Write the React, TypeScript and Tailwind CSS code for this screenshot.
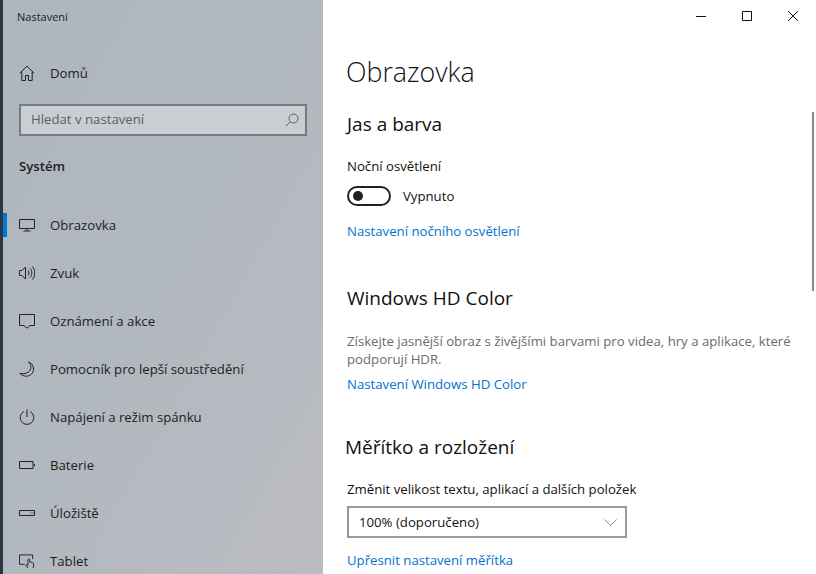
import React from 'react';

const stroke = { fill: 'none', stroke: '#1f2326', strokeWidth: 1 };

const HomeIcon = () => (
  <svg width="16" height="16" viewBox="0 0 16 16" {...stroke}>
    <path d="M.8 8.200 8 1.200l7.200 7M2.800 6.600v8.900h3.700v-5h3v5h3.700V6.600" />
  </svg>
);
const MonitorIcon = () => (
  <svg width="16" height="16" viewBox="0 0 16 16" {...stroke}>
    <path d="M.5 2.500h15v9H.5zM8 11.500v2.500M4.500 14h7" />
  </svg>
);
const SoundIcon = () => (
  <svg width="16" height="16" viewBox="0 0 16 16" {...stroke}>
    <path d="M.5 5.500h2.500L6.500 2v12L3 10.500H.5zM9 5.500c1.200 1.500 1.200 3.500 0 5M11.200 3.500c2.200 2.700 2.200 6.300 0 9M13.500 1.500c3 3.800 3 9.200 0 13" />
  </svg>
);
const NotifyIcon = () => (
  <svg width="16" height="16" viewBox="0 0 16 16" {...stroke}>
    <path d="M.5 1.500h15v11H11L8 15.200 5 12.500H.5z" />
  </svg>
);
const MoonIcon = () => (
  <svg width="16" height="16" viewBox="0 0 16 16" {...stroke}>
    <path d="M9.500 .8c3.500 3.200 3.200 8-.5 10.500-2.500 1.600-5.500 1.700-8.200 1 1.800 2 4 2.900 6.500 2.900 4 0 7.200-3.200 7.200-7.200 0-3.200-2-6-5-7.200z" />
  </svg>
);
const PowerIcon = () => (
  <svg width="16" height="16" viewBox="0 0 16 16" {...stroke}>
    <path d="M8 .5v7.500M4.800 2.600a6.800 6.800 0 1 0 6.400 0" />
  </svg>
);
const BatteryIcon = () => (
  <svg width="16" height="16" viewBox="0 0 16 16" {...stroke}>
    <path d="M.5 4.500h13.500v7H.5zM15.500 7v2" />
  </svg>
);
const StorageIcon = () => (
  <svg width="16" height="16" viewBox="0 0 16 16" {...stroke}>
    <path d="M.5 5.500h15v5H.5zM11.500 8h1M13.500 8h1" />
  </svg>
);
const TabletIcon = () => (
  <svg width="17" height="16" viewBox="0 0 17 16" {...stroke}>
    <path d="M6 11.500H.5v-10h14V6M9.500 15.500 7 12.500l1-.8 1.500 1V6.800a1 1 0 0 1 2 0V9l3 .8c.7.200 1 .6 1 1.200v2.500l-.8 2" />
  </svg>
);

const NAV = [
  { label: 'Obrazovka', icon: MonitorIcon, active: true },
  { label: 'Zvuk', icon: SoundIcon },
  { label: 'Oznámení a akce', icon: NotifyIcon },
  { label: 'Pomocník pro lepší soustředění', icon: MoonIcon },
  { label: 'Napájení a režim spánku', icon: PowerIcon },
  { label: 'Baterie', icon: BatteryIcon },
  { label: 'Úložiště', icon: StorageIcon },
  { label: 'Tablet', icon: TabletIcon },
];

const Sidebar: React.FC = () => (
  <aside className="w-[320px] shrink-0 h-full overflow-hidden bg-gradient-to-br from-[#aeb6be] via-[#b2b8bf] to-[#bbbcc1] text-[#1b1f22]">
    <div className="h-[34px] pl-[14px] flex items-center text-[11px]">Nastavení</div>
    <div className="mt-[15px] h-[48px] pl-[16px] flex items-center gap-[15px] text-[13.200px]">
      <HomeIcon />
      <span className="pt-[2px]">Domů</span>
    </div>
    <div className="mt-[7px] ml-[16px] w-[288px] h-[32px] border-2 border-[#767b80] bg-[#c9ced2] flex items-center justify-between pl-[10px] pr-[6px] text-[13.200px] text-[#5b6065]">
      <span>Hledat v nastavení</span>
      <svg width="14" height="14" viewBox="0 0 14 14" fill="none" stroke="#5b6065" strokeWidth="1">
        <circle cx="8.500" cy="5.500" r="4.500" />
        <path d="M5.300 8.700.8 13.200" />
      </svg>
    </div>
    <div className="mt-[18px] h-[24px] pl-[16px] pt-[2px] flex items-center text-[13.200px] font-semibold">Systém</div>
    <nav className="mt-[23px]">
      {NAV.map(item => (
        <div key={item.label} className="relative h-[48px] pl-[16px] flex items-center gap-[15px] text-[13.200px]">
          {item.active && <span className="absolute left-0 top-[12px] w-[4px] h-[24px] bg-[#0078d7]" />}
          <span className="w-[16px] flex justify-center"><item.icon /></span>
          <span className="pt-[2px]">{item.label}</span>
        </div>
      ))}
    </nav>
  </aside>
);

const WindowButtons = () => (
  <div className="h-[32px] flex justify-end items-center gap-[36px] pr-[18px]">
    <svg width="10" height="10" viewBox="0 0 10 10" fill="none" stroke="#111" strokeWidth="1"><path d="M0 5.500h10" /></svg>
    <svg width="10" height="10" viewBox="0 0 10 10" fill="none" stroke="#111" strokeWidth="1"><path d="M.5.500h9v9h-9z" /></svg>
    <svg width="10" height="10" viewBox="0 0 10 10" fill="none" stroke="#111" strokeWidth="1"><path d="M0 0l10 10M10 0 0 10" /></svg>
  </div>
);

const Link: React.FC<{ children: React.ReactNode; className?: string }> = ({ children, className }) => (
  <div className={`text-[13.200px] leading-[20px] text-[#0073cf] ${className ?? ''}`}>{children}</div>
);

const Content: React.FC = () => (
  <main className="relative flex-1 h-full overflow-hidden bg-white text-[#111]">
    <WindowButtons />
    <div className="pl-[24px]">
      <h1 className="mt-[20px] text-[26.800px] leading-[40px] font-light -ml-[1px]">Obrazovka</h1>
      <h2 className="mt-[20px] text-[19px] leading-[24px]">Jas a barva</h2>
      <div className="mt-[20px] text-[13.200px] leading-[20px]">Noční osvětlení</div>
      <div className="mt-[10px] flex items-center gap-[12px] text-[13.200px] leading-[20px]">
        <div className="w-[44px] h-[20px] rounded-full border-2 border-[#222] flex items-center pl-[4px]">
          <span className="w-[10px] h-[10px] rounded-full bg-[#222]" />
        </div>
        <span>Vypnuto</span>
      </div>
      <Link className="mt-[15px]">Nastavení nočního osvětlení</Link>
      <h2 className="mt-[45px] text-[19px] leading-[24px]">Windows HD Color</h2>
      <p className="mt-[22px] w-[456px] text-[13.200px] leading-[18px] text-[#6b6b6b]">
        Získejte jasnější obraz s živějšími barvami pro videa, hry a aplikace, které podporují HDR.
      </p>
      <Link className="mt-[6px]">Nastavení Windows HD Color</Link>
      <h2 className="mt-[41px] text-[19px] leading-[24px] -ml-[2px]">Měřítko a rozložení</h2>
      <div className="mt-[20px] text-[13.200px] leading-[20px]">Změnit velikost textu, aplikací a dalších položek</div>
      <div className="mt-[7px] w-[280px] h-[32px] border-2 border-[#999] flex items-center justify-between pl-[10px] pr-[8px] text-[13.200px]">
        <span className="pt-[2px]">100% (doporučeno)</span>
        <svg width="13" height="7" viewBox="0 0 13 7" fill="none" stroke="#888" strokeWidth="1"><path d="M.5.500 6.500 6.500l6-6" /></svg>
      </div>
      <Link className="mt-[12px]">Upřesnit nastavení měřítka</Link>
    </div>
    <span className="absolute right-[2px] top-[112px] w-[2px] h-[179px] bg-[#8a8a8a]" />
  </main>
);

export default function App() {
  return (
    <div className="w-[816px] h-[574px] flex overflow-hidden bg-white font-['Open_Sans',sans-serif]">
      <div className="w-[3px] shrink-0 bg-[#2c3640]" />
      <Sidebar />
      <Content />
    </div>
  );
}
